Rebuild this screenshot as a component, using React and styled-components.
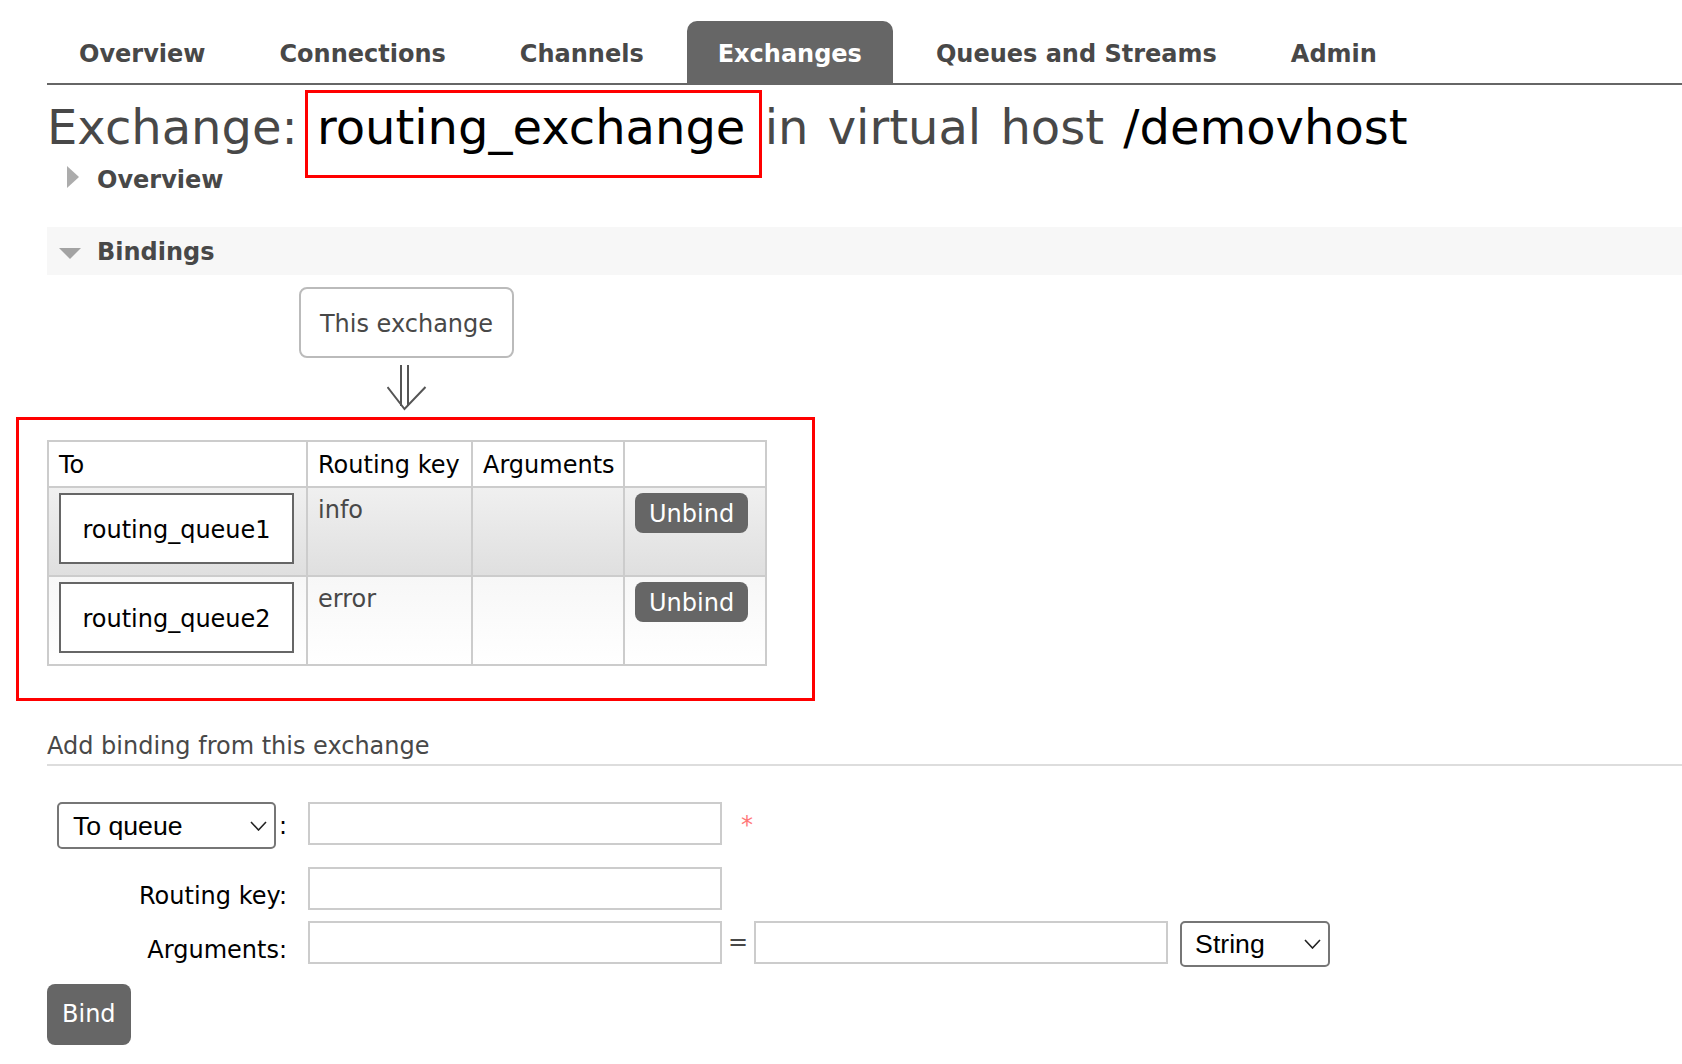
import React from 'react';
import styled, { createGlobalStyle, css } from 'styled-components';

const GlobalStyle = createGlobalStyle`
  html, body { margin: 0; padding: 0; background: #fff; }
  body {
    font-family: "DejaVu Sans", Verdana, sans-serif;
    font-size: 24px;
    color: #484848;
  }
  * { box-sizing: border-box; }
`;

const Page = styled.div`
  padding: 21px 0 18px 47px;
`;

const TabBar = styled.ul`
  display: flex;
  margin: 0;
  padding: 0 0 0 1px;
  list-style: none;
  border-bottom: 2px solid #666;
`;

const Tab = styled.li`
  padding: 4px 31px 0;
  margin-right: 12px;
  line-height: 58px;
  font-size: 24px;
  font-weight: bold;
  white-space: nowrap;
  border-radius: 10px 10px 0 0;
  color: ${(p) => (p.$active ? '#fff' : '#484848')};
  background: ${(p) => (p.$active ? '#666' : 'transparent')};
`;

const Title = styled.h1`
  margin: 15px 0 0;
  font-size: 48px;
  line-height: 55px;
  font-weight: normal;
  word-spacing: 4px;
  color: #484848;
  white-space: nowrap;
`;

const Name = styled.span`
  color: #000;
  position: relative;
  ${(p) =>
    p.$marked &&
    css`
      &::after {
        content: '';
        position: absolute;
        top: -9px;
        bottom: -23px;
        left: -12px;
        right: -17px;
        border: 3px solid #f00;
        pointer-events: none;
      }
    `}
`;

const SectionHeader = styled.h2`
  display: flex;
  align-items: flex-start;
  margin: ${(p) => p.$gap || 0}px 0 0;
  height: 48px;
  padding: 2px 0 0 12px;
  font-size: 24px;
  font-weight: bold;
  line-height: 46px;
  color: #484848;
  background: ${(p) => (p.$shaded ? '#f7f7f7' : 'transparent')};
`;

const CaretSvg = styled.svg`
  flex: none;
  margin: 9px 16px 0 0;
`;

function Caret({ open }) {
  return (
    <CaretSvg width="22" height="26" viewBox="0 0 22 26">
      {open ? (
        <polygon points="0,10 22,10 11,21" fill="#a3a3a3" />
      ) : (
        <polygon points="8,0 20,11 8,22" fill="#acacac" />
      )}
    </CaretSvg>
  );
}

const ExchangeBox = styled.div`
  margin: 12px 0 0 252px;
  width: 215px;
  height: 71px;
  padding-top: 3px;
  border: 2px solid #bbb;
  border-radius: 8px;
  line-height: 64px;
  text-align: center;
  color: #484848;
  white-space: nowrap;
`;

const ArrowSvg = styled.svg`
  display: block;
  margin: 7px 0 0 340px;
`;

const TableWrap = styled.div`
  position: relative;
  width: fit-content;
  margin-top: 29px;
  &::after {
    content: '';
    position: absolute;
    top: -23px;
    left: -31px;
    right: -48px;
    bottom: -35px;
    border: 3px solid #f00;
    pointer-events: none;
  }
`;

const Table = styled.table`
  border-collapse: collapse;
  table-layout: fixed;
  width: 718px;
  border: 2px solid #ccc;
`;

const Th = styled.th`
  padding: 5px 10px 3px;
  border: 2px solid #ccc;
  text-align: left;
  font-weight: normal;
  line-height: 36px;
  color: #000;
  white-space: nowrap;
`;

const Tr = styled.tr`
  background: ${(p) =>
    p.$alt === 1
      ? 'linear-gradient(#f0f0f0, #dfdfdf)'
      : 'linear-gradient(#f7f7f7, #fff)'};
`;

const Td = styled.td`
  padding: 5px 10px 11px;
  border: 2px solid #ccc;
  vertical-align: top;
  line-height: 34px;
  color: #484848;
`;

const QueueLink = styled.a`
  display: block;
  width: 235px;
  height: 71px;
  padding-top: 4px;
  border: 2px solid #666;
  background: #fff;
  color: #000;
  text-align: center;
  line-height: 63px;
  text-decoration: none;
  white-space: nowrap;
`;

const Button = styled.button`
  display: block;
  border: none;
  border-radius: 8px;
  background: #666;
  color: #fff;
  font-family: "DejaVu Sans", Verdana, sans-serif;
  font-size: 24px;
  cursor: pointer;
  ${(p) =>
    p.$small
      ? css`
          height: 40px;
          padding: 2px 14px 0;
          line-height: 38px;
        `
      : css`
          height: 61px;
          padding: 0 15px;
          line-height: 61px;
        `}
`;

const AddHeading = styled.h3`
  margin: 62px 0 0;
  font-size: 24px;
  font-weight: normal;
  line-height: 36px;
  color: #484848;
  border-bottom: 2px solid #ddd;
`;

const FormRow = styled.div`
  display: grid;
  grid-template-columns: 240px auto;
  column-gap: 21px;
  align-items: start;
  margin-top: ${(p) => p.$gap}px;
`;

const LabelCell = styled.div`
  display: flex;
  justify-content: flex-end;
  align-items: flex-start;
  color: #000;
  white-space: nowrap;
  ${(p) =>
    p.$plain
      ? css`
          padding-top: 15px;
          line-height: 28px;
        `
      : css`
          line-height: 36px;
        `}
`;

const Colon = styled.span`
  margin-left: 3px;
  padding-top: 6px;
  line-height: 36px;
  color: #000;
`;

const FieldCell = styled.div`
  display: flex;
  align-items: flex-start;
`;

const TextInput = styled.input`
  width: 414px;
  height: 43px;
  border: 2px solid #ccc;
  border-radius: 0;
  background: #fff;
  outline: none;
  padding: 0 6px;
  font-size: 24px;
`;

const Mand = styled.span`
  margin-left: 19px;
  padding-top: 5px;
  line-height: 36px;
  color: #f77;
`;

const Equals = styled.span`
  margin: 0 6px;
  padding-top: 3px;
  line-height: 36px;
  color: #484848;
`;

const SelectWrap = styled.div`
  position: relative;
  flex: none;
  width: ${(p) => p.$w}px;
  height: ${(p) => p.$h}px;
  margin-left: ${(p) => p.$ml || 0}px;
`;

const Select = styled.select`
  appearance: none;
  -webkit-appearance: none;
  width: 100%;
  height: 100%;
  padding: 0 0 0 ${(p) => p.$pl}px;
  border: 2px solid #767676;
  border-radius: 5px;
  background: #fff;
  color: #000;
  font-family: "Liberation Sans", Arial, sans-serif;
  font-size: 26.67px;
  outline: none;
`;

const Chevron = styled.svg`
  position: absolute;
  right: 9px;
  top: 50%;
  transform: translateY(-50%);
  pointer-events: none;
`;

function ChevronIcon() {
  return (
    <Chevron width="17" height="10" viewBox="0 0 17 10">
      <polyline points="1,1 8.5,9 16,1" fill="none" stroke="#222" strokeWidth="1.6" />
    </Chevron>
  );
}

const BindRow = styled.div`
  margin-top: 17px;
`;

const tabs = ['Overview', 'Connections', 'Channels', 'Exchanges', 'Queues and Streams', 'Admin'];

const bindings = [
  { queue: 'routing_queue1', key: 'info' },
  { queue: 'routing_queue2', key: 'error' },
];

export default function App() {
  return (
    <>
      <GlobalStyle />
      <Page>
        <TabBar>
          {tabs.map((t) => (
            <Tab key={t} $active={t === 'Exchanges'}>
              {t}
            </Tab>
          ))}
        </TabBar>

        <Title>
          Exchange: <Name $marked>routing_exchange</Name> in virtual host <Name>/demovhost</Name>
        </Title>

        <SectionHeader>
          <Caret />
          Overview
        </SectionHeader>

        <SectionHeader $gap={24} $shaded>
          <Caret open />
          Bindings
        </SectionHeader>

        <ExchangeBox>This exchange</ExchangeBox>
        <ArrowSvg width="40" height="46" viewBox="0 0 40 46">
          <line x1="14" y1="0" x2="14" y2="41" stroke="#555" strokeWidth="2" />
          <line x1="21" y1="0" x2="21" y2="41" stroke="#555" strokeWidth="2" />
          <polyline points="0.5,22 17.5,44 38.5,22" fill="none" stroke="#555" strokeWidth="2" />
        </ArrowSvg>

        <TableWrap>
          <Table>
            <colgroup>
              <col style={{ width: 259 }} />
              <col style={{ width: 165 }} />
              <col style={{ width: 152 }} />
              <col style={{ width: 142 }} />
            </colgroup>
            <thead>
              <tr>
                <Th>To</Th>
                <Th>Routing key</Th>
                <Th>Arguments</Th>
                <Th />
              </tr>
            </thead>
            <tbody>
              {bindings.map((b, i) => (
                <Tr key={b.queue} $alt={i + 1}>
                  <Td>
                    <QueueLink href="#">{b.queue}</QueueLink>
                  </Td>
                  <Td>{b.key}</Td>
                  <Td />
                  <Td>
                    <Button $small>Unbind</Button>
                  </Td>
                </Tr>
              ))}
            </tbody>
          </Table>
        </TableWrap>

        <AddHeading>Add binding from this exchange</AddHeading>

        <FormRow $gap={36}>
          <LabelCell>
            <SelectWrap $w={219} $h={47}>
              <Select $pl={14} defaultValue="queue">
                <option value="queue">To queue</option>
                <option value="exchange">To exchange</option>
              </Select>
              <ChevronIcon />
            </SelectWrap>
            <Colon>:</Colon>
          </LabelCell>
          <FieldCell>
            <TextInput type="text" />
            <Mand>*</Mand>
          </FieldCell>
        </FormRow>

        <FormRow $gap={18}>
          <LabelCell $plain>Routing key:</LabelCell>
          <FieldCell>
            <TextInput type="text" />
          </FieldCell>
        </FormRow>

        <FormRow $gap={11}>
          <LabelCell $plain>Arguments:</LabelCell>
          <FieldCell>
            <TextInput type="text" />
            <Equals>=</Equals>
            <TextInput type="text" />
            <SelectWrap $w={150} $h={46} $ml={12}>
              <Select $pl={13} defaultValue="string">
                <option value="string">String</option>
                <option value="number">Number</option>
                <option value="boolean">Boolean</option>
                <option value="list">List</option>
              </Select>
              <ChevronIcon />
            </SelectWrap>
          </FieldCell>
        </FormRow>

        <BindRow>
          <Button>Bind</Button>
        </BindRow>
      </Page>
    </>
  );
}
